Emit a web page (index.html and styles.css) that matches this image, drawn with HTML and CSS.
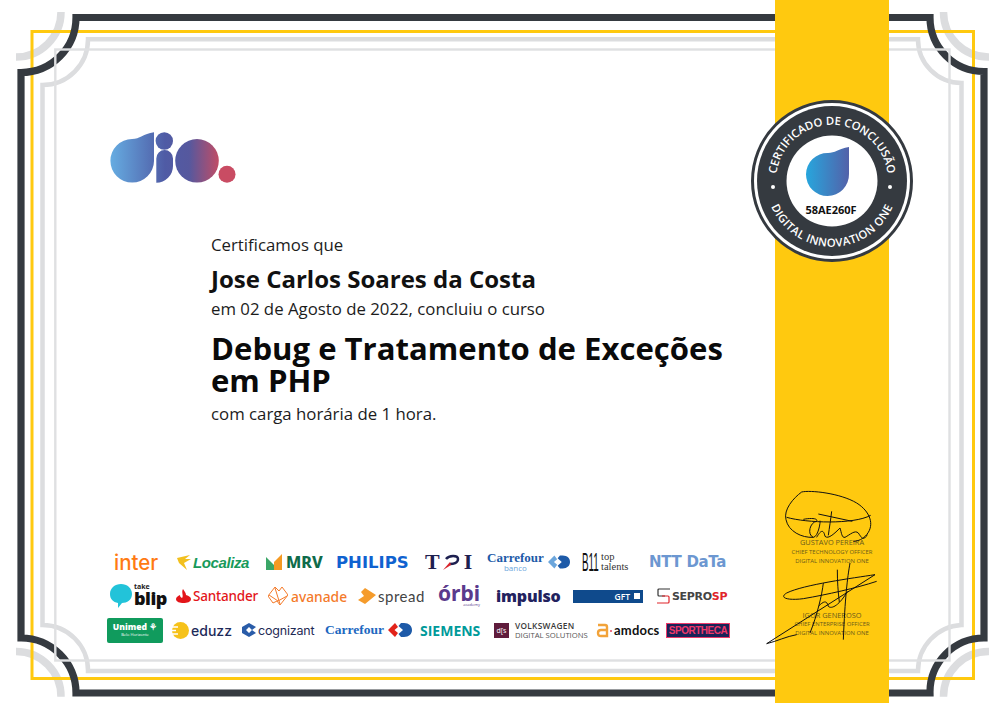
FILE: index.html
```html
<!DOCTYPE html>
<html lang="pt-BR">
<head>
    <meta charset="UTF-8">
    <meta name="viewport" content="width=device-width, initial-scale=1.0">
    <title>Certificado de Conclusão</title>
    <link rel="stylesheet" href="styles.css">
</head>
<body>

<div class="certificate">
    <!-- frame lines behind everything -->
    <svg class="frame" width="1005" height="703" viewBox="0 0 1005 703" fill="none">
        <g stroke="#dcdddf" stroke-width="7.5">
            <path d="M61 12A45 45 0 0 1 16 57"/>
            <path d="M943.5 12A45 45 0 0 0 989 57"/>
            <path d="M16 651.5A45 45 0 0 1 61 696.7"/>
            <path d="M989 651.5A45 45 0 0 0 943.5 696.7"/>
        </g>
        <rect x="32" y="31.500" width="941.500" height="647" stroke="#ffc90f" stroke-width="3"/>
        <path d="M42.500 85A45.500 45.500 0 0 0 88 39.300H918A43.500 43.500 0 0 0 961.500 83V625A46 46 0 0 0 918 671H88A45.500 45.500 0 0 0 42.500 625Z" stroke="#dcdddf" stroke-width="4.500"/>
        <path d="M21 72.500A55 55 0 0 0 76 17.500H930A54 54 0 0 0 984 71.500V638A54 54 0 0 0 930 693H76A55 55 0 0 0 21 638Z" stroke="#353a40" stroke-width="7.200"/>
        <rect x="55.300" y="49.500" width="894.200" height="611" stroke="#dfe0e2" stroke-width="2.400"/>
    </svg>

    <main class="content">
        <svg class="dio-logo" width="126" height="52" viewBox="110 132 126 52">
            <defs>
                <linearGradient id="dioGrad" gradientUnits="userSpaceOnUse" x1="110" y1="0" x2="220" y2="0">
                    <stop offset="0" stop-color="#66ade2"/>
                    <stop offset="0.5" stop-color="#4f5ba5"/>
                    <stop offset="0.72" stop-color="#56589e"/>
                    <stop offset="1" stop-color="#c54c63"/>
                </linearGradient>
            </defs>
            <path fill="url(#dioGrad)" d="M154 132.300V161A21.800 21.800 0 1 1 132 139C140 139 143 134 154 132.300Z"/>
            <circle fill="url(#dioGrad)" cx="164.300" cy="141" r="8.700"/>
            <path fill="url(#dioGrad)" d="M156.300 182.700V158.400A8.350 8.350 0 0 1 173 158.400V166A16.700 16.700 0 0 1 156.300 182.700Z"/>
            <circle fill="url(#dioGrad)" cx="197" cy="160.800" r="21.800"/>
            <circle fill="#c94c63" cx="227" cy="174.300" r="8.500"/>
        </svg>

        <div class="details">
            <p class="line">Certificamos que</p>
            <h2 class="student">Jose Carlos Soares da Costa</h2>
            <p class="line">em 02 de Agosto de 2022, concluiu o curso</p>
            <h1 class="course">Debug e Tratamento de Exceções em PHP</h1>
            <p class="line">com carga horária de 1 hora.</p>
        </div>

        <div class="partners">
            <div class="partner-row row-a">
                <div class="logo w-inter"><span class="inter">inter</span></div>
                <div class="logo w-localiza">
                    <svg width="14" height="15" viewBox="0 0 14 15"><path fill="#f2c01e" d="M0 3L13 0L8 4L14 4L7 8L10 15L2 8Z"/></svg>
                    <span class="localiza">Localiza</span>
                </div>
                <div class="logo w-mrv">
                    <svg width="16" height="16" viewBox="0 0 16 16"><path fill="#3aa667" d="M0 3L8 11V16H0Z"/><path fill="#f59a23" d="M16 0V16H8V8Z"/></svg>
                    <span class="mrv">MRV</span>
                </div>
                <div class="logo w-philips"><span class="philips">PHILIPS</span></div>
                <div class="logo w-tqi">
                    <span class="tqi">T</span>
                    <svg width="18" height="16" viewBox="0 0 18 16" fill="none"><path stroke="#1e2050" stroke-width="2.500" d="M4 5C7 1 16 1 16 5C16 9 11 10 8 10"/><path fill="#d8232a" d="M1 16L8 8L9 11Z"/></svg>
                    <span class="tqi tqi-i">I</span>
                </div>
                <div class="logo w-carrefour">
                    <div class="carrefour-bank">
                        <span class="carrefour">Carrefour</span>
                        <span class="banco">banco</span>
                    </div>
                    <svg class="carrefour-mark" width="22" height="16" viewBox="0 0 24 16"><path fill="#6ca6dc" d="M7 1L0 8L7 15L10 11L6.500 8L10 5Z"/><path fill="#1d5aa8" d="M13 1H16C21 1 24 4 24 8C24 12 21 15 16 15H13L10.500 12L15 8L10.500 4Z"/></svg>
                </div>
                <div class="logo w-b11">
                    <span class="b11">B11</span>
                    <span class="talents">top<br>talents</span>
                </div>
                <div class="logo w-ntt"><span class="ntt">NTT DaTa</span></div>
            </div>

            <div class="partner-row row-b">
                <div class="logo w-blip">
                    <svg width="22" height="24" viewBox="0 0 22 24"><path fill="#22c3d9" d="M11 0C17 0 22 4 22 10C22 16 17 19 12 19L8 24L8 19C3 18 0 15 0 10C0 4 5 0 11 0Z"/></svg>
                    <div class="blip-text"><span class="take">take</span><span class="blip">blip</span></div>
                </div>
                <div class="logo w-santander">
                    <svg width="15" height="14" viewBox="0 0 15 14"><path fill="#e3151a" d="M7 0C9 3 10 4 10 6C13 7 15 8 15 10C15 13 11 14 7.500 14C4 14 0 13 0 10C0 8 2 7 4 6C4 8 5 8 6 9C8 7 5 3 7 0Z"/></svg>
                    <span class="santander">Santander</span>
                </div>
                <div class="logo w-avanade">
                    <svg width="20" height="20" viewBox="0 0 20 20" fill="none" stroke="#f47a2a"><path d="M0 10L7 1L11 5L14 1L20 9L12 19L9 15L5 17ZM1 9L10 15L19 10M7 2L12 18"/></svg>
                    <span class="avanade">avanade</span>
                </div>
                <div class="logo w-spread">
                    <svg width="18" height="16" viewBox="0 0 18 16"><path fill="#f59b2b" d="M7 0L18 7L7 16L0 12L6 8L3 4Z"/></svg>
                    <span class="spread">spread</span>
                </div>
                <div class="logo w-orbi">
                    <div class="orbi-text"><span class="orbi">órbi</span><span class="academy">academy</span></div>
                </div>
                <div class="logo w-impulso"><span class="impulso">impulso</span></div>
                <div class="logo w-gft"><div class="gft">GFT <i class="gft-box"></i></div></div>
                <div class="logo w-seprosp">
                    <svg width="13" height="16" viewBox="0 0 13 16" fill="none" stroke-width="1.200"><path stroke="#333" d="M13 1H2Q1 1 1 2V7Q1 8 2 8H8"/><path stroke="#e0242a" d="M0 15H11Q12 15 12 14V9Q12 8 11 8H5"/></svg>
                    <span class="seprosp">SEPRO<em>SP</em></span>
                </div>
            </div>

            <div class="partner-row row-c">
                <div class="logo w-unimed">
                    <div class="unimed"><span class="unimed-name">Unimed ⚘</span><span class="unimed-city">Belo Horizonte</span></div>
                </div>
                <div class="logo w-eduzz">
                    <svg width="17" height="17" viewBox="0 0 17 17"><circle fill="#f6c21a" cx="8.500" cy="8.500" r="8.500"/><path stroke="#fff" stroke-width="1.500" d="M0 5H6M0 8.500H4M0 12H6"/></svg>
                    <span class="eduzz">eduzz</span>
                </div>
                <div class="logo w-cognizant">
                    <svg width="14" height="14" viewBox="0 0 14 14" fill="none"><path fill="#2a5ca8" d="M7 0L14 4L10 7L7 4L4 7L7 10L10 7L14 10L7 14L0 10V4Z"/></svg>
                    <span class="cognizant">cognizant</span>
                </div>
                <div class="logo w-carrefour2">
                    <span class="carrefour carrefour-lg">Carrefour</span>
                    <svg class="carrefour-mark" width="24" height="16" viewBox="0 0 24 16"><path fill="#e2231a" d="M7 1L0 8L7 15L10 11L6.500 8L10 5Z"/><path fill="#1d5aa8" d="M13 1H16C21 1 24 4 24 8C24 12 21 15 16 15H13L10.500 12L15 8L10.500 4Z"/></svg>
                </div>
                <div class="logo w-siemens"><span class="siemens">SIEMENS</span></div>
                <div class="logo w-vw">
                    <div class="vw-box">d[s</div>
                    <div class="vw-text"><span class="vw-top">VOLKSWAGEN</span><span class="vw-sub">DIGITAL SOLUTIONS</span></div>
                </div>
                <div class="logo w-amdocs">
                    <svg width="16" height="15" viewBox="0 0 16 15" fill="none"><path stroke="#f2a33a" stroke-width="2.400" d="M2 2H9Q11 2 11 4V13H5Q2 13 2 10Q2 7 5 7H11"/><circle fill="#e8425a" cx="15" cy="8" r="1"/></svg>
                    <span class="amdocs">amdocs</span>
                </div>
                <div class="logo w-sportheca"><div class="sportheca">SPORTHECA</div></div>
            </div>
        </div>
    </main>

    <aside class="ribbon">
        <svg class="seal" width="164" height="164" viewBox="0 0 164 164">
            <defs>
                <linearGradient id="dropGrad" x1="0" y1="0" x2="1" y2="0">
                    <stop offset="0" stop-color="#27a6dd"/>
                    <stop offset="1" stop-color="#5361a9"/>
                </linearGradient>
                <path id="sealTop" d="M29 100A56 56 0 1 1 135 100"/>
                <path id="sealBottom" d="M16.400 89A66 66 0 0 0 147.600 89"/>
            </defs>
            <circle cx="82" cy="82" r="79.500" fill="#fff" stroke="#353a40" stroke-width="3"/>
            <circle cx="82" cy="82" r="75" fill="#353a40"/>
            <circle cx="82" cy="82" r="45.500" fill="#fff"/>
            <circle cx="23" cy="88" r="2" fill="#fff"/>
            <circle cx="140" cy="88" r="2" fill="#fff"/>
            <text class="seal-text"><textPath href="#sealTop" startOffset="50%" text-anchor="middle">CERTIFICADO DE CONCLUSÃO</textPath></text>
            <text class="seal-text seal-text-low"><textPath href="#sealBottom" startOffset="50%" text-anchor="middle">DIGITAL INNOVATION ONE</textPath></text>
            <path fill="url(#dropGrad)" d="M99 48V75A21.500 21.500 0 1 1 78 54C85 54 88 50 99 48Z"/>
            <text class="seal-code" x="81" y="115" text-anchor="middle">58AE260F</text>
        </svg>

        <div class="signatures">
            <div class="signer signer-first">
                <strong>GUSTAVO PEREIRA</strong>
                <span>CHIEF TECHNOLOGY OFFICER</span>
                <span>DIGITAL INNOVATION ONE</span>
            </div>
            <div class="signer signer-second">
                <strong>IGOR GENEROSO</strong>
                <span>CHIEF ENTERPRISE OFFICER</span>
                <span>DIGITAL INNOVATION ONE</span>
            </div>
            <svg class="scribble" width="130" height="170" viewBox="0 0 390 510" fill="none" stroke="#111" stroke-width="3">
                <path d="M125 42C100 60 70 95 78 125C85 160 125 180 160 178M125 42C150 36 240 45 290 75C330 100 345 140 320 170C310 182 295 190 280 190"/>
                <path d="M80 118C140 135 280 140 332 112"/>
                <path d="M130 124C150 120 175 120 170 130C150 132 140 170 160 178C175 176 182 130 180 128"/>
                <path d="M175 108L277 130M215 100C212 125 208 150 205 172"/>
                <path d="M170 178C180 160 190 150 195 175C205 185 225 165 240 150C245 165 245 180 255 178C270 170 285 155 295 165C305 180 310 190 322 170"/>
                <path d="M20 497L345 290C280 300 130 320 80 345C55 360 85 368 130 362C200 350 290 330 350 310"/>
                <path d="M20 497C50 490 80 475 110 470"/>
                <path d="M270 255C262 300 255 360 250 485M232 275C232 310 234 340 238 372"/>
                <path d="M190 315C186 350 172 410 150 465M175 385C190 370 200 365 205 385C215 395 240 380 262 340"/>
            </svg>
        </div>
    </aside>
</div>

</body>
</html>
```

FILE: styles.css
```css
html, body {
    margin: 0;
    padding: 0;
    background-color: #fff;
}
.certificate {
    position: relative;
    display: flex;
    width: 1005px;
    height: 703px;
    overflow: hidden;
    font-family: "Open Sans", Arial, sans-serif;
    color: #1c1c1c;
}
.frame {
    position: absolute;
    top: 0;
    left: 0;
}
.content {
    position: relative;
    width: 775px;
    flex: none;
    box-sizing: border-box;
    padding-top: 132px;
}
.dio-logo {
    display: block;
    margin-left: 110px;
}
.details {
    width: 530px;
    margin: 50px 0 0 211px;
}
.line {
    margin: 0;
    font-size: 16.800px;
    line-height: 22px;
}
.student {
    margin: 8px 0 4px;
    font-size: 24px;
    line-height: 30px;
    font-weight: 700;
    color: #111;
}
.course {
    margin: 12px 0 7px;
    font-size: 31.100px;
    line-height: 32px;
    font-weight: 700;
    color: #0a0a0a;
}
.partners {
    position: absolute;
    top: 545px;
    left: 0;
    width: 775px;
}
.partner-row {
    display: flex;
    align-items: center;
    height: 34px;
}
.row-a { padding-left: 114px; }
.row-b { padding-left: 110px; }
.row-c { padding-left: 107px; }
.logo {
    display: flex;
    align-items: center;
    gap: 2px;
    flex: none;
    white-space: nowrap;
}
.w-inter { width: 63px; }
.w-localiza { width: 89px; }
.w-mrv { width: 70px; }
.w-philips { width: 89px; }
.w-tqi { width: 62px; }
.w-carrefour { width: 95px; }
.w-b11 { width: 67px; }
.w-ntt { width: 81px; }
.w-blip { width: 66px; }
.w-santander { width: 92px; }
.w-avanade { width: 90px; }
.w-spread { width: 80px; }
.w-orbi { width: 58px; }
.w-impulso { width: 77px; }
.w-gft { width: 84px; }
.w-seprosp { width: 73px; }
.w-unimed { width: 65px; }
.w-eduzz { width: 70px; }
.w-cognizant { width: 83px; }
.w-carrefour2 { width: 95px; }
.w-siemens { width: 74px; }
.w-vw { width: 102px; }
.w-amdocs { width: 70px; }
.w-sportheca { width: 64px; }

.inter {
    font-family: Inter, sans-serif;
    font-size: 20.500px;
    font-weight: 500;
    color: #ff7a12;
}
.localiza {
    font-family: "Liberation Sans", sans-serif;
    font-size: 15px;
    font-style: italic;
    font-weight: 700;
    letter-spacing: -0.400px;
    color: #179a5b;
}
.mrv {
    margin-left: 2px;
    font-family: "Noto Sans", sans-serif;
    font-size: 16px;
    font-weight: 800;
    color: #0f6b4a;
}
.philips {
    font-family: "DejaVu Sans", sans-serif;
    font-size: 16.500px;
    font-weight: 700;
    color: #0f62d0;
}
.tqi {
    font-family: "Liberation Serif", serif;
    font-size: 22px;
    font-weight: 700;
    line-height: 16px;
    color: #1e2050;
}
.tqi-i {
    margin-left: 2px;
}
.carrefour-bank {
    display: flex;
    flex-direction: column;
    align-items: center;
}
.carrefour {
    font-family: "Liberation Serif", serif;
    font-size: 13px;
    font-weight: 700;
    line-height: 12px;
    color: #1d5aa8;
}
.carrefour-lg {
    font-size: 13.500px;
    color: #2067c0;
}
.banco {
    font-size: 8px;
    line-height: 8px;
    color: #6ca6dc;
}
.carrefour-mark {
    margin-left: 2px;
}
.b11 {
    display: inline-block;
    width: 17px;
    font-family: "Liberation Sans", sans-serif;
    font-size: 26px;
    line-height: 20px;
    transform: scaleX(0.38);
    transform-origin: left;
    color: #111;
}
.talents {
    font-family: "Liberation Serif", serif;
    font-size: 10.500px;
    line-height: 10px;
    color: #333;
}
.ntt {
    font-family: "DejaVu Sans", sans-serif;
    font-size: 15px;
    font-weight: 700;
    letter-spacing: -0.300px;
    color: #6c97d1;
}
.blip-text {
    display: flex;
    flex-direction: column;
    margin-top: -3px;
}
.take {
    font-size: 7px;
    line-height: 8px;
    font-weight: 700;
    color: #222;
}
.blip {
    font-size: 18px;
    line-height: 15px;
    font-weight: 800;
    letter-spacing: -0.500px;
    color: #111;
}
.santander {
    font-size: 13.500px;
    font-family: "Noto Sans", sans-serif;
    font-weight: 500;
    letter-spacing: -0.200px;
    color: #e3151a;
}
.avanade {
    margin-left: 1px;
    font-family: "Noto Sans", sans-serif;
    font-size: 13.800px;
    font-weight: 500;
    color: #f47a2a;
}
.spread {
    font-family: Lato, sans-serif;
    font-size: 15px;
    letter-spacing: 0.500px;
    color: #444;
}
.orbi-text {
    display: flex;
    flex-direction: column;
    align-items: flex-end;
    width: 42px;
}
.orbi {
    font-family: "Noto Sans", sans-serif;
    font-size: 21px;
    line-height: 18px;
    font-weight: 700;
    color: #5a3a8c;
}
.academy {
    font-size: 4px;
    line-height: 6px;
    color: #5a3a8c;
}
.impulso {
    font-size: 16px;
    font-weight: 800;
    letter-spacing: -0.200px;
    color: #22225e;
}
.gft {
    display: flex;
    align-items: center;
    justify-content: flex-end;
    gap: 4px;
    width: 70px;
    height: 13px;
    box-sizing: border-box;
    padding-right: 3px;
    background-color: #0f4a8c;
    font-size: 8.500px;
    font-weight: 600;
    color: #fff;
}
.gft-box {
    width: 6px;
    height: 6px;
    background-color: #fff;
}
.seprosp {
    font-family: "DejaVu Sans", sans-serif;
    font-size: 11px;
    font-weight: 700;
    letter-spacing: -0.300px;
    color: #444;
}
.seprosp em {
    font-style: normal;
    color: #e0242a;
}
.unimed {
    display: flex;
    flex-direction: column;
    align-items: center;
    justify-content: center;
    width: 56px;
    height: 25px;
    border-radius: 2px;
    background-color: #109b5d;
    color: #fff;
}
.unimed-name {
    font-size: 8.500px;
    line-height: 10px;
    font-weight: 800;
}
.unimed-city {
    font-size: 4px;
    line-height: 6px;
}
.eduzz {
    font-family: Inter, sans-serif;
    font-size: 14px;
    font-weight: 500;
    color: #1d2a5a;
}
.cognizant {
    font-family: Inter, sans-serif;
    font-size: 12.500px;
    color: #1f2a55;
    letter-spacing: -0.200px;
}
.siemens {
    font-size: 14px;
    font-weight: 700;
    color: #009a9a;
}
.vw-box {
    display: flex;
    align-items: center;
    justify-content: center;
    width: 15px;
    height: 15px;
    background-color: #5f1c3c;
    font-size: 7px;
    color: #fff;
}
.vw-text {
    display: flex;
    flex-direction: column;
    margin-left: 4px;
}
.vw-top {
    font-size: 8.300px;
    line-height: 10px;
    font-weight: 600;
    letter-spacing: 0.300px;
    color: #3a3a3a;
}
.vw-sub {
    font-size: 7.700px;
    line-height: 9px;
    color: #555;
}
.amdocs {
    font-family: Lato, sans-serif;
    font-size: 13px;
    font-weight: 700;
    letter-spacing: 0.200px;
    color: #111;
}
.sportheca {
    width: 64px;
    height: 15px;
    box-sizing: border-box;
    border: 1px solid #f03a6a;
    background-color: #1a2358;
    font-family: "Liberation Sans", sans-serif;
    font-size: 10px;
    line-height: 13px;
    font-weight: 700;
    letter-spacing: -0.500px;
    text-align: center;
    color: #f0386a;
}

.ribbon {
    position: relative;
    display: flex;
    flex-direction: column;
    width: 114px;
    height: 703px;
    flex: none;
    background-color: #ffc90f;
}
.seal {
    display: block;
    flex: none;
    margin: 99px 0 0 -25px;
}
.seal-text {
    font-family: "Open Sans", sans-serif;
    font-size: 11.300px;
    font-weight: 600;
    fill: #fff;
}
.seal-text-low {
    letter-spacing: 0.400px;
}
.seal-code {
    font-family: "Open Sans", sans-serif;
    font-size: 11px;
    font-weight: 700;
    fill: #111;
}
.signatures {
    position: relative;
    margin-top: 275px;
}
.signer {
    display: flex;
    flex-direction: column;
    align-items: center;
    margin-left: -20px;
    margin-right: -20px;
    font-size: 5.900px;
    line-height: 9px;
    color: #6a5a1c;
}
.signer strong {
    font-weight: 400;
    font-size: 7.400px;
    line-height: 9.500px;
}
.signer-second {
    margin-top: 45px;
}
.scribble {
    position: absolute;
    top: -60px;
    left: -15px;
}
```
